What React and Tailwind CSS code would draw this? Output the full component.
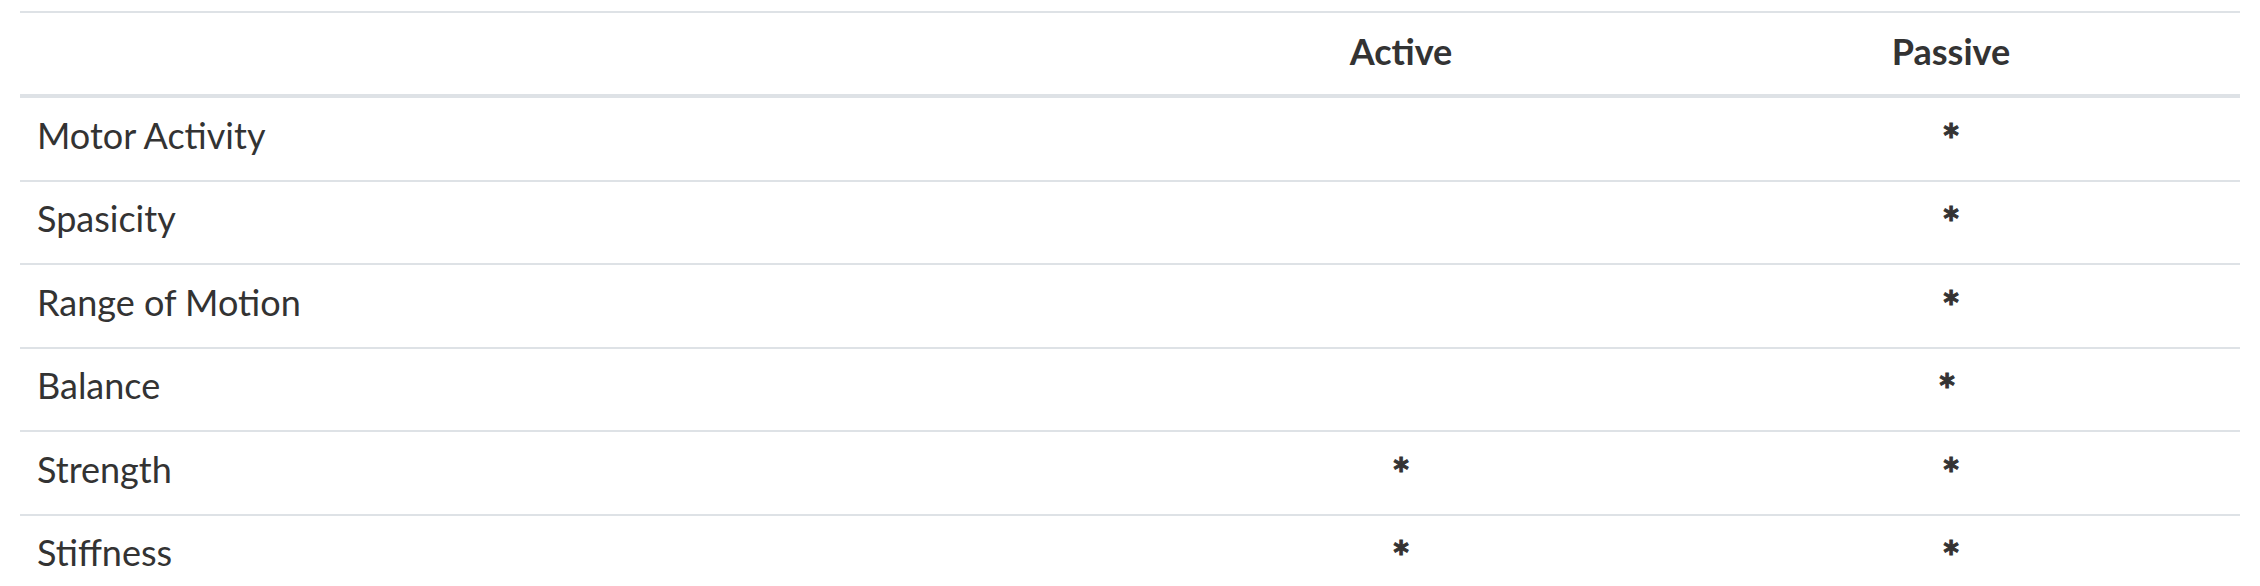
const ROWS = [
  { name: 'Motor Activity', active: false, passive: true },
  { name: 'Spasicity', active: false, passive: true },
  { name: 'Range of Motion', active: false, passive: true },
  { name: 'Balance', active: false, passive: true, shift: true },
  { name: 'Strength', active: true, passive: true },
  { name: 'Stiffness', active: true, passive: true },
];

const COLS = 'grid grid-cols-[1120px_522px_578px] items-center';

function Star() {
  return (
    <span className="font-bold text-[44px] leading-[36px] relative top-[7px] [-webkit-text-stroke:1px_#333]">
      *
    </span>
  );
}

export default function App() {
  return (
    <div
      className="bg-white w-[2260px] h-[586px] overflow-hidden pt-[11px] px-[20px] text-[#333] text-[36px]"
      style={{ fontFamily: 'Lato, "Noto Sans", sans-serif' }}
    >
      {/* header */}
      <div className={`${COLS} h-[87px] border-t-2 border-b-4 border-[#dee2e6] font-bold`}>
        <span />
        <span className="text-center -mt-[6px]">Active</span>
        <span className="text-center -mt-[6px]">Passive</span>
      </div>

      {ROWS.map((r, i) => (
        <div
          key={r.name}
          className={`${COLS} ${i === 0 ? 'h-[81.5px]' : 'h-[83.5px] border-t-2 border-[#dee2e6]'}`}
        >
          <span className="pl-[17px] -mt-[8px]">{r.name}</span>
          <span className="text-center -mt-[8px]">{r.active && <Star />}</span>
          <span className={`text-center -mt-[8px] ${r.shift ? 'pr-[8px]' : ''}`}>
            {r.passive && <Star />}
          </span>
        </div>
      ))}
    </div>
  );
}
